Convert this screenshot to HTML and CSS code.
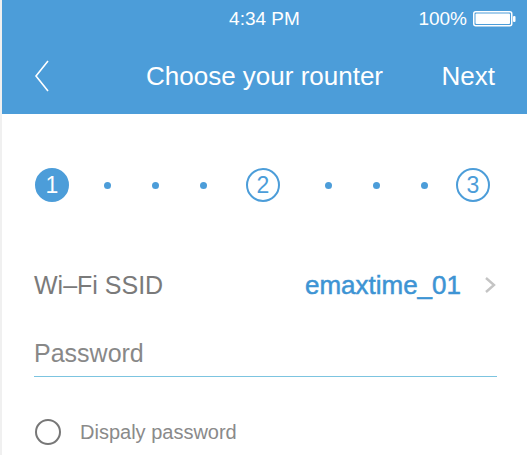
FILE: index.html
```html
<!DOCTYPE html>
<html>
<head>
  <title>Choose your rounter</title>
  <meta charset="utf-8">
  <link rel="stylesheet" href="styles.css">
</head>
<body>
<div class="app">
  <div class="header">
    <div class="status">
      <span></span>
      <span class="time">4:34 PM</span>
      <span class="battery">
        100%
        <svg width="44" height="16" viewBox="0 0 44 16">
          <rect x="0.75" y="0.75" width="38" height="14" rx="2" fill="none" stroke="#fff" stroke-width="1.5"/>
          <rect x="2.5" y="2.5" width="34.5" height="10.5" rx="1" fill="#fff"/>
          <rect x="40" y="5" width="2.5" height="6" rx="1" fill="#fff"/>
        </svg>
      </span>
    </div>
    <div class="nav">
      <span class="back">
        <svg width="16" height="32" viewBox="0 0 16 32">
          <polyline points="14,1 2,16 14,31" fill="none" stroke="#fff" stroke-width="1.6"/>
        </svg>
      </span>
      <span class="title">Choose your rounter</span>
      <span class="next">Next</span>
    </div>
  </div>

  <div class="steps">
    <span class="step active">1</span>
    <span class="dot"></span>
    <span class="dot"></span>
    <span class="dot"></span>
    <span class="step">2</span>
    <span class="dot"></span>
    <span class="dot"></span>
    <span class="dot last"></span>
    <span class="step">3</span>
  </div>

  <div class="form">
    <div class="ssid-row">
      <span class="label">Wi&#8211;Fi SSID</span>
      <span class="ssid">emaxtime_01</span>
      <svg class="arrow" width="14" height="18" viewBox="0 0 14 18">
        <polyline points="3,2 11,9 3,16" fill="none" stroke="#c4c4c4" stroke-width="2.4"/>
      </svg>
    </div>

    <input type="password" class="password" placeholder="Password">

    <label class="show-row">
      <span class="radio"></span>
      <span>Dispaly password</span>
    </label>
  </div>
</div>
</body>
</html>
```

FILE: styles.css
```css
body {
  margin: 0;
  font-family: "Liberation Sans", Arial, sans-serif;
  background: #fff;
}

.app {
  width: 525px;
  height: 455px;
  border-left: 2px solid #f0f0f0;
  overflow: hidden;
}

.header {
  background-color: #4c9dd9;
  color: #fff;
  height: 114px;
}

.status {
  display: grid;
  grid-template-columns: 1fr auto 1fr;
  align-items: center;
  height: 38px;
  font-size: 19px;
}

.time {
  text-align: center;
}

.battery {
  display: flex;
  align-items: center;
  justify-content: flex-end;
  gap: 6px;
  padding-right: 10px;
}

.nav {
  display: grid;
  grid-template-columns: 1fr auto 1fr;
  align-items: center;
  height: 76px;
  font-size: 26px;
}

.back {
  display: flex;
  align-items: center;
  padding-left: 32px;
}

.title {
  text-align: center;
}

.next {
  text-align: right;
  padding-right: 32px;
}

.steps {
  display: flex;
  align-items: center;
  gap: 41px;
  margin: 54px 0 0 33px;
}

.step {
  box-sizing: border-box;
  width: 34px;
  height: 34px;
  border: 2px solid #4c9dd9;
  border-radius: 50%;
  display: flex;
  align-items: center;
  justify-content: center;
  color: #4c9dd9;
  font-size: 23px;
}

.step.active {
  background-color: #4c9dd9;
  color: #fff;
  margin-right: -10px;
}

.step + .dot {
  margin-left: 4px;
}

.dot + .step {
  margin-left: -2px;
}

.dot.last + .step {
  margin-left: -13px;
}

.dot {
  width: 7px;
  height: 7px;
  border-radius: 50%;
  background-color: #4c9dd9;
}

.form {
  padding: 0 30px 0 32px;
}

.ssid-row {
  display: flex;
  align-items: center;
  height: 50px;
  margin-top: 58px;
  font-size: 25px;
}

.label {
  flex: 1;
  color: #7a7a7a;
}

.ssid {
  color: #3d94d4;
  font-size: 26px;
  -webkit-text-stroke: 0.5px #3d94d4;
  margin-right: 22px;
}

.password {
  display: block;
  box-sizing: border-box;
  width: 100%;
  height: 47px;
  margin-top: 20px;
  padding: 0;
  border: none;
  border-bottom: 1px solid #7cc4e0;
  font-family: inherit;
  font-size: 25px;
  outline: none;
}

.password::placeholder {
  color: #888;
}

.show-row {
  display: flex;
  align-items: center;
  gap: 19px;
  height: 40px;
  margin-top: 35px;
  margin-left: 1px;
  font-size: 20px;
  color: #8a8a8a;
}

.radio {
  box-sizing: border-box;
  width: 26px;
  height: 26px;
  border: 2px solid #777;
  border-radius: 50%;
}
```
